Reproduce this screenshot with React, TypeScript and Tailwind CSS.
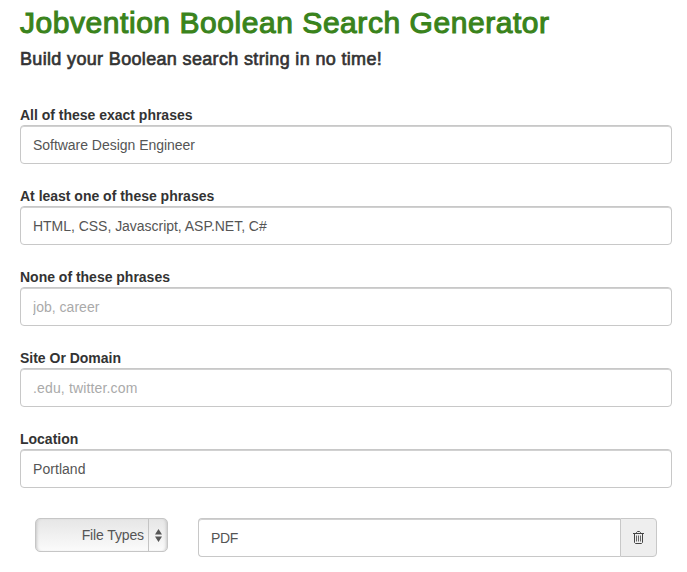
import { useState } from "react";

interface FieldProps {
  id: string;
  label: string;
  value?: string;
  placeholder?: string;
  inputClass: string;
}

const fields: FieldProps[] = [
  {
    id: "all",
    label: "All of these exact phrases",
    value: "Software Design Engineer",
    inputClass: "tracking-[-0.03px]",
  },
  {
    id: "any",
    label: "At least one of these phrases",
    value: "HTML, CSS, Javascript, ASP.NET, C#",
    inputClass: "tracking-[-0.03px]",
  },
  {
    id: "none",
    label: "None of these phrases",
    placeholder: "job, career",
    inputClass: "tracking-[0.02px]",
  },
  {
    id: "site",
    label: "Site Or Domain",
    placeholder: ".edu, twitter.com",
    inputClass: "tracking-[0.15px]",
  },
  {
    id: "location",
    label: "Location",
    value: "Portland",
    inputClass: "tracking-[0.05px]",
  },
];

function Field({ id, label, value = "", placeholder, inputClass }: FieldProps) {
  const [text, setText] = useState(value);

  return (
    <div className="mb-[22px] flex flex-col">
      <label
        htmlFor={id}
        className="h-[20px] text-[14px] leading-[20px] font-bold tracking-[-0.01px] text-[#333]"
      >
        {label}
      </label>
      <input
        id={id}
        value={text}
        placeholder={placeholder}
        onChange={(e) => setText(e.target.value)}
        className={`
          h-[39px] w-full rounded-[4px] border border-[#c8c8c8] bg-white px-[12px]
          text-[14px] text-[#555] shadow-[inset_0_1px_0_rgba(0,0,0,0.18)]
          outline-none placeholder:text-[#aaa] ${inputClass}
        `}
      />
    </div>
  );
}

function TrashIcon() {
  return (
    <svg width="11" height="13" viewBox="0 0 11 13" fill="none" stroke="#444">
      <path d="M0 2.5h11M3.5 2.5v-1l1-1h2l1 1v1M1.5 3v8.5l1 1h6l1-1V3" />
      <path stroke="#666" d="M3.5 4.5v6M5.5 4.5v6M7.5 4.5v6" />
    </svg>
  );
}

export default function App() {
  const [fileType, setFileType] = useState("PDF");

  return (
    <div className="h-[572px] overflow-hidden bg-white pr-[15px] pl-[20px] font-['Liberation_Sans',Arial,sans-serif]">
      <h1 className="h-[46px] pt-[6px] text-[30px] leading-[33px] font-normal tracking-[0.55px] whitespace-nowrap text-[#3a831c] [-webkit-text-stroke:1.1px_#3a831c]">
        Jobvention Boolean Search Generator
      </h1>
      <h2 className="h-[59px] pt-[3px] text-[18px] leading-[20px] font-normal tracking-[0.34px] whitespace-nowrap text-[#333] [-webkit-text-stroke:0.65px_#333]">
        Build your Boolean search string in no time!
      </h2>

      <form>
        {fields.map((field) => (
          <Field key={field.id} {...field} />
        ))}

        {/* File type row */}
        <div className="flex items-start gap-[30px] px-[15px] pt-[8px]">
          <button
            type="button"
            className="
              flex h-[34px] w-[133px] items-stretch rounded-[5px] border border-[#c6c6c6]
              bg-linear-to-b from-[#e6e6e6] to-[#fbfbfb]
              text-[14px] text-[#555] shadow-[inset_3px_0_3px_-2px_#c8c8c8,inset_-3px_0_3px_-2px_#c8c8c8]
            "
          >
            <span className="flex flex-1 items-center justify-end pr-[4px] tracking-[-0.12px]">
              File Types
            </span>
            <span className="flex w-[19px] items-center justify-center border-l border-[#c4c4c4]">
              <svg width="7" height="13" viewBox="0 0 7 13" fill="#555">
                <path d="M3.5 0L7 5.5H0zM3.5 13L0 7.5h7z" />
              </svg>
            </span>
          </button>

          <div className="flex h-[39px] flex-1">
            <input
              aria-label="File type"
              value={fileType}
              onChange={(e) => setFileType(e.target.value)}
              className="
                h-full min-w-0 flex-1 rounded-l-[4px] border border-r-0 border-[#c8c8c8] bg-white
                px-[12px] text-[14px] tracking-[-0.3px] text-[#555]
                shadow-[inset_0_1px_0_rgba(0,0,0,0.18)] outline-none
              "
            />
            <button
              type="button"
              aria-label="Clear file type"
              onClick={() => setFileType("")}
              className="flex w-[37px] items-center justify-center rounded-r-[4px] border border-[#c8c8c8] bg-[#eee]"
            >
              <TrashIcon />
            </button>
          </div>
        </div>
      </form>
    </div>
  );
}
